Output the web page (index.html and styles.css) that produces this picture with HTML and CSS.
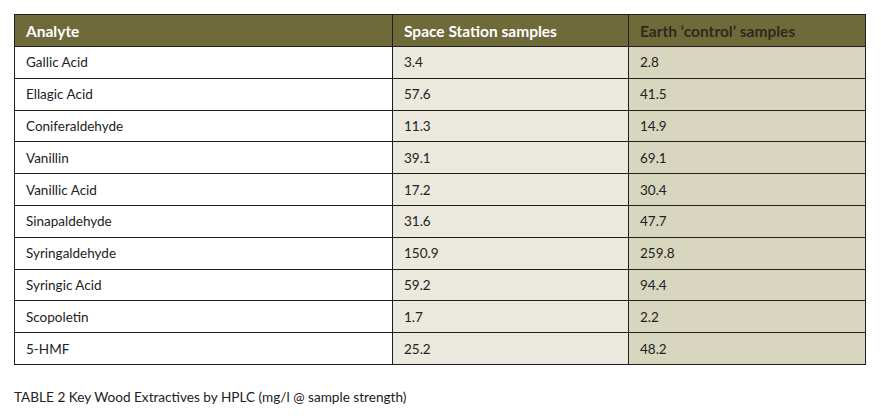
FILE: index.html
```html
<!DOCTYPE html>
<html>
<head>
<meta charset="utf-8">
<link rel="stylesheet" href="styles.css">
</head>
<body>
<div class="page">
  <table class="data">
    <colgroup>
      <col class="c1"><col class="c2"><col class="c3">
    </colgroup>
    <thead>
      <tr><th>Analyte</th><th>Space Station samples</th><th class="dark">Earth ‘control’ samples</th></tr>
    </thead>
    <tbody>
      <tr><td>Gallic Acid</td><td class="s">3.4</td><td class="e">2.8</td></tr>
      <tr><td>Ellagic Acid</td><td class="s">57.6</td><td class="e">41.5</td></tr>
      <tr><td>Coniferaldehyde</td><td class="s">11.3</td><td class="e">14.9</td></tr>
      <tr><td>Vanillin</td><td class="s">39.1</td><td class="e">69.1</td></tr>
      <tr><td>Vanillic Acid</td><td class="s">17.2</td><td class="e">30.4</td></tr>
      <tr><td>Sinapaldehyde</td><td class="s">31.6</td><td class="e">47.7</td></tr>
      <tr><td>Syringaldehyde</td><td class="s">150.9</td><td class="e">259.8</td></tr>
      <tr><td>Syringic Acid</td><td class="s">59.2</td><td class="e">94.4</td></tr>
      <tr><td>Scopoletin</td><td class="s">1.7</td><td class="e">2.2</td></tr>
      <tr><td>5-HMF</td><td class="s">25.2</td><td class="e">48.2</td></tr>
    </tbody>
  </table>
  <p class="caption">TABLE 2 Key Wood Extractives by HPLC (mg/l @ sample strength)</p>
</div>
</body>
</html>
```

FILE: styles.css
```css
html, body {
  margin: 0;
  padding: 0;
  background: #ffffff;
}
.page {
  padding: 14px 0 0 14px;
  font-family: "Lato", "Open Sans", sans-serif;
  color: #222222;
}
.data {
  border-collapse: collapse;
  width: 851px;
  table-layout: fixed;
}
.c1 { width: 378px; }
.c2 { width: 236px; }
.c3 { width: 237px; }
.data th, .data td {
  border: 1px solid #1e1e1a;
  text-align: left;
  padding: 0 0 0 11px;
  height: 31.8px;
  font-size: 13.5px;
  box-sizing: border-box;
}
.data th {
  background: #6f6a3a;
  color: #ffffff;
  font-weight: 700;
  font-size: 15.5px;
  height: 32px;
}
.data th.dark {
  color: #2e2b1c;
}
.data td.s { background: #ebe8dd; }
.data td.e { background: #d8d6be; }
.caption {
  margin: 24px 0 0 0;
  font-size: 13.6px;
  color: #222222;
}
```
